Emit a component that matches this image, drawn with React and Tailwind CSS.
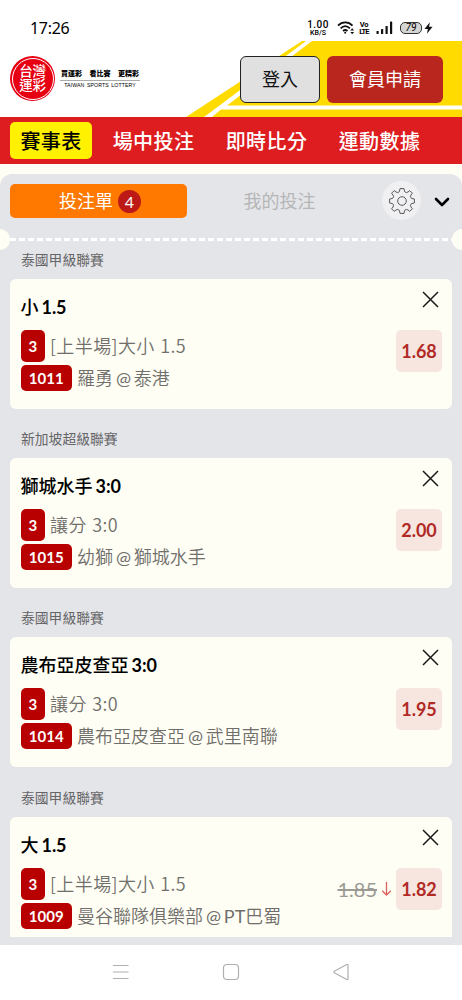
const tabs = ['賽事表', '場中投注', '即時比分', '運動數據'];

const bets = [
  { league: '泰國甲級聯賽', pick: '小', line: '1.5', market: '[上半場]大小 1.5', code: '1011', match: '羅勇 @ 泰港', odds: '1.68' },
  { league: '新加坡超級聯賽', pick: '獅城水手', line: '3:0', market: '讓分 3:0', code: '1015', match: '幼獅 @ 獅城水手', odds: '2.00' },
  { league: '泰國甲級聯賽', pick: '農布亞皮查亞', line: '3:0', market: '讓分 3:0', code: '1014', match: '農布亞皮查亞 @ 武里南聯', odds: '1.95' },
  { league: '泰國甲級聯賽', pick: '大', line: '1.5', market: '[上半場]大小 1.5', code: '1009', match: '曼谷聯隊俱樂部 @ PT巴蜀', odds: '1.82', oldOdds: '1.85' },
];

function StatusBar() {
  return (
    <div className="h-[41px] shrink-0 bg-white flex items-start justify-between pl-[30px] pr-[29px] text-black">
      <span className="mt-[16px] text-[16px] leading-[24px] tracking-[-0.3px] font-['Noto_Sans']">17:26</span>
      <div className="mt-[18px] flex items-center h-5">
        <div className="w-[22px] text-center font-['Roboto'] font-medium">
          <div className="text-[10px] leading-[9px] tracking-[0.4px]">1.00</div>
          <div className="text-[7px] leading-[8px]">KB/S</div>
        </div>
        <svg className="ml-[8px]" width="19" height="16" viewBox="0 0 19 16" fill="none" stroke="#111" strokeWidth="1.8">
          <path d="M1 5.6C5.200 1.300 11.300 1.300 15.500 5.600" />
          <path d="M3.600 8.400C6.500 5.600 10 5.600 12.900 8.400" />
          <path d="M6 11C7.500 9.700 9 9.700 10.500 11" />
          <circle cx="8.200" cy="12.800" r="1" fill="#111" stroke="none" />
          <path d="M13.300 10.600L15.200 8.300L17.100 10.600ZM13.300 12L15.200 14.300L17.100 12Z" fill="#111" stroke="none" />
        </svg>
        <div className="ml-[3px] w-[10px] flex flex-col items-center font-['Roboto'] font-bold text-[7.500px] leading-[7px]">
          <span className="tracking-[-0.3px]">Vo</span>
          <span className="tracking-[-0.9px]">LTE</span>
        </div>
        <svg className="ml-[7px]" width="17" height="14" viewBox="0 0 17 14" fill="#111">
          <rect x="0.500" y="10" width="2.200" height="3" rx="0.600" />
          <rect x="5" y="8" width="2.200" height="5" rx="0.600" />
          <rect x="9.500" y="5" width="2.200" height="8" rx="0.600" />
          <rect x="14" y="0.500" width="2.200" height="12.500" rx="0.600" />
        </svg>
        <div className="ml-[7px] w-[22px] h-[12px] rounded-[5px] border border-[#333] bg-[#d5d5d5] text-center text-[10px] leading-[10px] font-['Roboto'] italic">79</div>
        <svg className="ml-[2px]" width="9" height="14" viewBox="0 0 10 14" fill="#111">
          <path d="M6.500 0.500L0.500 8.200H4.300L3.300 13.500L9.500 5.600H5.600Z" />
        </svg>
      </div>
    </div>
  );
}

function Logo() {
  return (
    <div className="flex items-center">
      <div className="size-[45px] rounded-full bg-[#e60012] p-[1.5px]">
        <div className="size-full rounded-full border border-white flex flex-col items-center justify-center text-white font-medium text-[13.500px] leading-[13.500px] tracking-[-0.3px]">
          <span>台灣</span>
          <span>運彩</span>
        </div>
      </div>
      <div className="ml-[5px] w-[80px] text-black text-center">
        <div className="flex justify-between px-px text-[7px] leading-[11px] font-black pb-[1px] border-b border-[#aaa]">
          <span>買運彩</span>
          <span>看比賽</span>
          <span>更精彩</span>
        </div>
        <div className="font-['Liberation_Sans'] text-[5.200px] leading-[9px] tracking-[0.100px] [word-spacing:1px] whitespace-nowrap">TAIWAN SPORTS LOTTERY</div>
      </div>
    </div>
  );
}

function Header() {
  return (
    <header className="relative h-[76px] shrink-0 bg-white">
      <svg className="absolute inset-0" width="462" height="76" viewBox="0 0 462 76">
        <path d="M302 0H462V76H186Z" fill="#ffdb00" />
        <path d="M306 0H312L227 64.500H462V68.500H221L212 76H204Z" fill="#fff" />
      </svg>
      <div className="relative flex justify-between items-start pl-[10px] pr-[19px] pt-[15px]">
        <Logo />
        <div className="flex gap-[7px] text-[18px]">
          <button className="w-[80px] h-[47px] rounded-[6px] border border-[#222] bg-[#e0e0e0] text-[#111]">登入</button>
          <button className="w-[116px] h-[47px] rounded-[6px] bg-[#b9261d] text-white">會員申請</button>
        </div>
      </div>
    </header>
  );
}

function NavTabs() {
  return (
    <nav className="h-[47px] shrink-0 bg-[#dd1d1f] flex items-center pl-[10px] pb-px text-[20px] font-medium text-white">
      {tabs.map((tab, i) => (
        <button
          key={tab}
          className={i === 0 ? 'h-[37px] w-[82px] mr-[5px] rounded-[5px] bg-[#fff100] text-black pt-px tracking-[0.4px]' : 'h-[37px] w-[113px] pt-px tracking-[0.4px]'}
        >
          {tab}
        </button>
      ))}
    </nav>
  );
}

function SlipHeader() {
  return (
    <div className="h-[70px] shrink-0 flex flex-col">
      <div className="flex items-center pl-[10px] pr-[11px] pt-[7px]">
        <button className="w-[177px] h-[34px] rounded-[5px] bg-[#ff7900] text-white text-[18px] flex items-center justify-center gap-[5px] pl-[3px] pt-px">
          投注單
          <span className="size-[23px] rounded-full bg-[#bd1a17] text-[16px] leading-[23px] text-center font-['Lato']">4</span>
        </button>
        <button className="w-[185px] pt-[2px] text-[18px] text-[#b5b5b7]">我的投注</button>
        <div className="ml-[10px] size-[39px] rounded-full bg-[#f0f0f3] flex items-center justify-center">
          <svg width="28" height="28" viewBox="0 0 28 28" fill="none" stroke="#5a5a5c" strokeWidth="1" strokeLinejoin="round">
            <circle cx="14" cy="14" r="4.300" />
            <path d="M12 1.600H16L16.600 4.600Q18.200 6.400 20 5L21.800 3.600L24.400 6.200L23 8Q21.600 9.800 23.400 11.400L26.400 12V16L23.400 16.600Q21.600 18.200 23 20L24.400 21.800L21.800 24.400L20 23Q18.200 21.600 16.600 23.400L16 26.400H12L11.400 23.400Q9.800 21.600 8 23L6.200 24.400L3.600 21.800L5 20Q6.400 18.200 4.600 16.600L1.600 16V12L4.600 11.400Q6.400 9.800 5 8L3.600 6.200L6.200 3.600L8 5Q9.800 6.400 11.400 4.600Z" />
          </svg>
        </div>
        <svg className="ml-[13px] mt-[3px]" width="16" height="10" viewBox="0 0 16 10" fill="none" stroke="#000" strokeWidth="2.600" strokeLinecap="round" strokeLinejoin="round">
          <path d="M2 2L8 8L14 2" />
        </svg>
      </div>
      {/* ticket perforation */}
      <div className="flex items-center h-[21px] mt-[9px] shrink-0">
        <span className="w-[10px] h-[21px] rounded-r-full bg-[#fffef4]" />
        <svg className="flex-1 h-[3px]" preserveAspectRatio="none">
          <line x1="0" y1="1.500" x2="442" y2="1.500" stroke="#fff" strokeWidth="3" strokeDasharray="6 3" />
        </svg>
        <span className="w-[10px] h-[21px] rounded-l-full bg-[#fffef4]" />
      </div>
    </div>
  );
}

// latin parts are one step heavier than the chinese names around them
function MatchName({ name }) {
  return name.split(/([A-Z@]+)/).map((part, i) => (
    i % 2 ? <span key={i} className="font-normal">{part}</span> : part
  ));
}

function BetCard({ bet }) {
  return (
    <section className="h-[179.200px] shrink-0">
      <h3 className="h-[34px] pl-[21px] pt-[5px] text-[13.800px] leading-[20px] text-[#666668]">{bet.league}</h3>
      <div className="mx-[10px] h-[130px] rounded-[6px] bg-[#fffef4] pl-[10.500px] pr-[10px] pt-[16px] flex justify-between">
        <div className="whitespace-nowrap">
          <div className="text-[18px] leading-[24px] font-medium text-black [word-spacing:-1.500px]">
            {bet.pick} <span className="font-bold tracking-[-0.1px]">{bet.line}</span>
          </div>
          <div className="mt-[11px] flex items-center gap-[5px]">
            <span className="w-[24.500px] h-[32px] rounded-[5px] bg-[#b90000] text-white font-bold text-[15px] leading-[32px] text-center">3</span>
            <span className="-mt-[2px] text-[18px] leading-[26px] font-[350] text-[#706f6c] tracking-[0.400px] [word-spacing:1px] font-['Noto_Sans_CJK_TC',sans-serif]">{bet.market}</span>
          </div>
          <div className="mt-[3px] flex items-center gap-[5px]">
            <span className="w-[51.500px] h-[26px] rounded-[5px] bg-[#b90000] text-white font-bold text-[15px] leading-[26px] text-center">{bet.code}</span>
            <span className="text-[18px] leading-[26px] font-[350] text-[#706f6c] [word-spacing:-2px]">
              <MatchName name={bet.match} />
            </span>
          </div>
        </div>
        <div className="flex flex-col items-end">
          <svg className="-mt-[4px] mr-[3px]" width="17" height="17" viewBox="0 0 17 17" stroke="#1a1a1a" strokeWidth="1.500">
            <path d="M1 1L16 16M16 1L1 16" />
          </svg>
          <div className="mt-[22px] flex items-center">
            {bet.oldOdds && (
              <>
                <s className="text-[20px] text-[#9b9a95]">{bet.oldOdds}</s>
                <svg className="ml-[4px] mr-[4px]" width="11" height="16" viewBox="0 0 11 16" fill="none" stroke="#df6260" strokeWidth="1.300">
                  <path d="M5.500 1V14M1.200 9.700L5.500 14L9.800 9.700" />
                </svg>
              </>
            )}
            <span className="w-[46px] h-[42px] rounded-[5px] bg-[#f7e5df] text-[#b12a26] font-bold text-[18px] leading-[42px] text-center">{bet.odds}</span>
          </div>
        </div>
      </div>
    </section>
  );
}

function SystemNav() {
  return (
    <div className="h-[55px] shrink-0 bg-white flex items-center justify-center gap-[92px] pb-[2px] text-[#b0b0b0]">
      <svg width="18" height="18" viewBox="0 0 18 18" fill="none" stroke="currentColor" strokeWidth="1.200">
        <path d="M1 2.500H16.500M1 9H16.500M1 15.500H16.500" />
      </svg>
      <svg width="18" height="18" viewBox="0 0 18 18" fill="none" stroke="currentColor" strokeWidth="1.200">
        <rect x="1.500" y="1.500" width="15" height="15" rx="3.500" />
      </svg>
      <svg width="18" height="18" viewBox="0 0 18 18" fill="none" stroke="currentColor" strokeWidth="1.200" strokeLinejoin="round">
        <path d="M14.700 1.500L2.300 8.200Q1.300 9 2.300 9.800L14.700 16.500Q16 17 16 15.500V2.500Q16 1 14.700 1.500Z" />
      </svg>
    </div>
  );
}

export default function App() {
  return (
    <div className="w-[462px] h-[1000px] overflow-hidden flex flex-col bg-[#fffef4] font-['Lato','Noto_Sans_CJK_TC',sans-serif]">
      <StatusBar />
      <Header />
      <NavTabs />
      <main className="mt-[10px] flex-1 min-h-0 rounded-t-[12px] bg-[#e4e5e8] flex flex-col pb-[8px] overflow-hidden">
        <SlipHeader />
        <div className="flex-1 min-h-0 overflow-hidden pt-px">
          {bets.map((bet) => (
            <BetCard key={bet.code} bet={bet} />
          ))}
        </div>
      </main>
      <SystemNav />
    </div>
  );
}
